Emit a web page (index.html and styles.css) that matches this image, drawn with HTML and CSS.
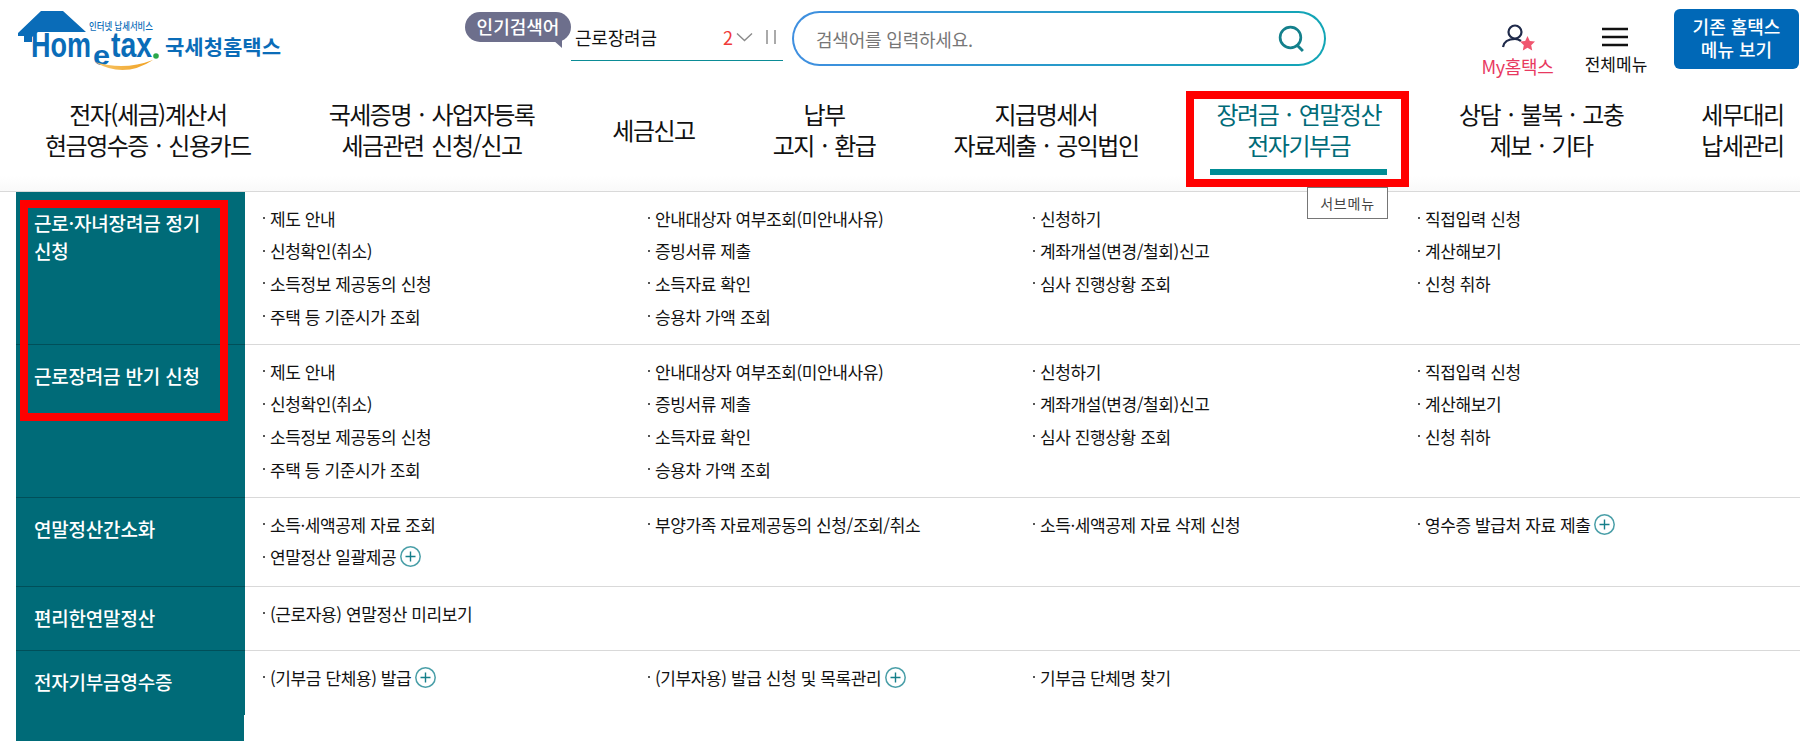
FILE: index.html
```html
<!DOCTYPE html>
<html lang="ko">
<head>
  <meta charset="UTF-8" />
  <title>국세청 홈택스</title>
  <link rel="stylesheet" href="styles.css">
</head>
<body>

  <!-- top bar -->
  <header class="topbar">
    <a class="logo" href="#">
      <svg width="268" height="64" viewBox="0 0 268 64">
        <defs>
          <linearGradient id="smile" x1="0" x2="1" y1="0" y2="0">
            <stop offset="0" stop-color="#f7c66b"/>
            <stop offset="1" stop-color="#f0a020"/>
          </linearGradient>
        </defs>
        <path d="M0 22 L23 0 H45 L68 21 H20 L14 26 V31 H6 V25 H0 Z" fill="#0a6cb8"/>
        <text class="logo-sub" x="71" y="19" textLength="64" lengthAdjust="spacingAndGlyphs">인터넷 납세서비스</text>
        <text class="logo-word" x="13" y="46" textLength="60" lengthAdjust="spacingAndGlyphs">Hom</text>
        <text class="logo-e" x="75" y="54" textLength="17" lengthAdjust="spacingAndGlyphs">e</text>
        <text class="logo-word" x="93" y="46" textLength="41" lengthAdjust="spacingAndGlyphs">tax</text>
        <circle cx="138" cy="45" r="2.8" fill="#2aa84a"/>
        <path d="M77 51 Q106 68 135 49 Q106 60 77 51 Z" fill="url(#smile)"/>
        <text class="logo-name" x="147" y="44" textLength="116" lengthAdjust="spacingAndGlyphs">국세청홈택스</text>
      </svg>
    </a>

    <div class="popular">
      <span class="popular-pill">인기검색어</span>
      <div class="ticker">
        <span class="ticker-word">근로장려금</span>
        <span class="ticker-num">2</span>
        <svg width="17" height="10" viewBox="0 0 17 10"><path d="M1 1.5 L8.5 8.5 L16 1.5" fill="none" stroke="#8a8a8a" stroke-width="1.4"/></svg>
        <span class="ticker-pause"></span>
      </div>
    </div>

    <form class="search">
      <span class="search-text">검색어를 입력하세요.</span>
      <svg width="29" height="29" viewBox="0 0 28 28"><circle cx="13" cy="13" r="10" fill="none" stroke="#14808c" stroke-width="2.6"/><path d="M19 20 L25 26" stroke="#14808c" stroke-width="2.8"/></svg>
    </form>

    <div class="util">
      <a class="util-item util-my" href="#">
        <svg width="34" height="28" viewBox="0 0 34 28">
          <circle cx="14" cy="8" r="6.5" fill="none" stroke="#1f2a4a" stroke-width="2.2"/>
          <path d="M2 23 C3 17 8 15 14 15 C16 15 18 15.5 20 17" fill="none" stroke="#1f2a4a" stroke-width="2.2"/>
          <path d="M26.5 12 L28.8 17 L34 17.6 L30.2 21.2 L31.2 26.5 L26.5 23.8 L21.8 26.5 L22.8 21.2 L19 17.6 L24.2 17 Z" fill="#f0566f"/>
        </svg>
        <span>My홈택스</span>
      </a>
      <a class="util-item util-all" href="#">
        <svg width="26" height="20" viewBox="0 0 26 20"><path d="M0 2 H26 M0 10 H26 M0 18 H26" stroke="#111" stroke-width="2.4"/></svg>
        <span>전체메뉴</span>
      </a>
      <a class="old-menu" href="#">기존 홈택스<br>메뉴 보기</a>
    </div>
  </header>

  <!-- main nav -->
  <nav class="gnb">
    <a href="#">전자(세금)계산서<br>현금영수증 · 신용카드</a>
    <a href="#">국세증명 · 사업자등록<br>세금관련 신청/신고</a>
    <a href="#">세금신고</a>
    <a href="#">납부<br>고지 · 환급</a>
    <a href="#">지급명세서<br>자료제출 · 공익법인</a>
    <a href="#" class="active">장려금 · 연말정산<br>전자기부금</a>
    <a href="#">상담 · 불복 · 고충<br>제보 · 기타</a>
    <a href="#">세무대리<br>납세관리</a>
  </nav>

  <!-- plus icon used in the lists -->
  <svg class="icon-defs" width="0" height="0">
    <symbol id="plus" viewBox="0 0 21 21">
      <circle cx="10.5" cy="10.5" r="9.7" fill="none" stroke="#4a9fa8" stroke-width="1.5"/>
      <path d="M5.5 10.5 H15.5 M10.5 5.5 V15.5" stroke="#157f8a" stroke-width="1.4"/>
    </symbol>
  </svg>

  <!-- sub menu -->
  <main class="submenu">
    <section class="row row-4">
      <h3>근로·자녀장려금 정기 신청</h3>
      <ul>
        <li>제도 안내</li><li>안내대상자 여부조회(미안내사유)</li><li>신청하기</li><li>직접입력 신청</li>
        <li>신청확인(취소)</li><li>증빙서류 제출</li><li>계좌개설(변경/철회)신고</li><li>계산해보기</li>
        <li>소득정보 제공동의 신청</li><li>소득자료 확인</li><li>심사 진행상황 조회</li><li>신청 취하</li>
        <li>주택 등 기준시가 조회</li><li>승용차 가액 조회</li>
      </ul>
    </section>
    <section class="row row-4">
      <h3>근로장려금 반기 신청</h3>
      <ul>
        <li>제도 안내</li><li>안내대상자 여부조회(미안내사유)</li><li>신청하기</li><li>직접입력 신청</li>
        <li>신청확인(취소)</li><li>증빙서류 제출</li><li>계좌개설(변경/철회)신고</li><li>계산해보기</li>
        <li>소득정보 제공동의 신청</li><li>소득자료 확인</li><li>심사 진행상황 조회</li><li>신청 취하</li>
        <li>주택 등 기준시가 조회</li><li>승용차 가액 조회</li>
      </ul>
    </section>
    <section class="row row-2">
      <h3>연말정산간소화</h3>
      <ul>
        <li>소득·세액공제 자료 조회</li><li>부양가족 자료제공동의 신청/조회/취소</li><li>소득·세액공제 자료 삭제 신청</li><li>영수증 발급처 자료 제출<svg class="plus"><use href="#plus"/></svg></li>
        <li>연말정산 일괄제공<svg class="plus"><use href="#plus"/></svg></li>
      </ul>
    </section>
    <section class="row row-1">
      <h3>편리한연말정산</h3>
      <ul>
        <li>(근로자용) 연말정산 미리보기</li>
      </ul>
    </section>
    <section class="row row-1 row-last">
      <h3>전자기부금영수증</h3>
      <ul>
        <li>(기부금 단체용) 발급<svg class="plus"><use href="#plus"/></svg></li><li>(기부자용) 발급 신청 및 목록관리<svg class="plus"><use href="#plus"/></svg></li><li>기부금 단체명 찾기</li>
      </ul>
    </section>
    <div class="side-tail"></div>
  </main>

  <!-- annotations over the page -->
  <div class="mark mark-nav"></div>
  <div class="mark mark-side"></div>
  <div class="tooltip">서브메뉴</div>

</body>
</html>
```

FILE: styles.css
```css
* {
  box-sizing: border-box;
}
html, body {
  height: 741px;
  overflow: hidden;
}
body {
  margin: 0;
  position: relative;
  background: #fff;
  color: #111;
  font-family: "Noto Sans CJK KR", "Noto Sans", sans-serif;
}
a {
  color: inherit;
  text-decoration: none;
}

/* top bar */
.topbar {
  display: flex;
  align-items: flex-start;
  height: 91px;
  padding-top: 9px;
}
.logo {
  width: 465px;
  padding: 2px 0 0 18px;
  flex: none;
}
.logo-sub {
  font-size: 10px;
  font-weight: 500;
  fill: #0a6cb8;
}
.logo-word {
  font-family: "Liberation Sans", sans-serif;
  font-size: 35px;
  font-weight: 700;
  fill: #0a6cb8;
}
.logo-e {
  font-family: "Liberation Sans", sans-serif;
  font-size: 28px;
  font-weight: 700;
  fill: #0a6cb8;
}
.logo-name {
  font-size: 20px;
  font-weight: 700;
  fill: #0a6cb8;
}
.popular {
  display: flex;
  width: 318px;
  flex: none;
}
.popular-pill {
  position: relative;
  width: 106px;
  height: 30px;
  margin-top: 3px;
  flex: none;
  border-radius: 15px;
  background: #6d6f8c;
  color: #fff;
  font-size: 18px;
  font-weight: 500;
  line-height: 28px;
  text-align: center;
}
.popular-pill::after {
  content: "";
  position: absolute;
  right: 9px;
  top: 28px;
  border-top: 8px solid #6d6f8c;
  border-left: 9px solid transparent;
}
.ticker {
  display: flex;
  align-items: center;
  width: 212px;
  height: 43px;
  margin: 9px 0 0 0;
  padding: 0 0 4px 4px;
  border-bottom: 1px solid #0b8c96;
}
.ticker-word {
  width: 148px;
  font-size: 18px;
  letter-spacing: -0.2px;
}
.ticker-num {
  width: 13px;
  color: #f03a3a;
  font-size: 18px;
}
.ticker-pause {
  width: 10px;
  height: 14px;
  margin-left: 13px;
  border-left: 2px solid #aaa;
  border-right: 2px solid #aaa;
}
.search {
  display: flex;
  align-items: center;
  justify-content: space-between;
  width: 534px;
  height: 55px;
  margin: 2px 0 0 9px;
  flex: none;
  padding: 0 18px 0 22px;
  border: 2px solid transparent;
  border-radius: 28px;
  background: linear-gradient(#fff, #fff) padding-box, linear-gradient(90deg, #3f8fe0, #12a5b5) border-box;
}
.search-text {
  color: #777;
  font-size: 18px;
  letter-spacing: -0.2px;
}
.util {
  display: flex;
  flex: 1;
  margin-left: 154px;
  align-items: flex-start;
}
.util-item {
  display: flex;
  flex-direction: column;
  align-items: center;
  white-space: nowrap;
}
.util-my {
  width: 75px;
  padding-top: 15px;
  color: #e8395f;
  font-size: 18px;
  line-height: 24px;
  letter-spacing: -0.3px;
}
.util-my svg {
  margin-bottom: 2px;
}
.util-all {
  width: 66px;
  margin-left: 28px;
  padding-top: 18px;
  font-size: 17px;
  line-height: 24px;
}
.util-all svg {
  margin-bottom: 5px;
  margin-right: 2px;
}
.old-menu {
  width: 125px;
  height: 60px;
  margin-left: 25px;
  flex: none;
  padding-top: 6px;
  border-radius: 6px;
  background: #0068b7;
  color: #fff;
  font-size: 18px;
  font-weight: 500;
  line-height: 23px;
  text-align: center;
}

/* main nav */
.gnb {
  display: flex;
  gap: 66px;
  height: 101px;
  padding: 6px 0 0 39px;
  border-bottom: 1px solid #d9d9d9;
  background: linear-gradient(#fff 85%, #f9f9f9);
  white-space: nowrap;
}
.gnb a {
  display: flex;
  align-items: center;
  box-sizing: content-box;
  height: 64px;
  padding: 0 6px 8px;
  border-bottom: 6px solid transparent;
  font-size: 24px;
  line-height: 31px;
  letter-spacing: -1.5px;
  word-spacing: 2.4px;
  text-align: center;
}
.gnb a.active {
  border-bottom-color: #008c95;
  color: #006b78;
}

/* sub menu */
.icon-defs {
  position: absolute;
}
.row {
  display: grid;
  grid-template-columns: 229px 1fr;
  margin-left: 16px;
}
.row h3 {
  margin: 0;
  padding: 17px 16px 0 18px;
  border-bottom: 1px solid #004f59;
  background: #006b78;
  color: #fff;
  font-size: 19px;
  font-weight: 500;
  line-height: 28px;
  letter-spacing: -0.2px;
  word-break: keep-all;
}
.row ul {
  display: grid;
  grid-template-columns: repeat(4, 385px);
  grid-auto-rows: 32.6px;
  align-content: start;
  margin: 0;
  padding: 10px 0 0 18px;
  border-bottom: 1px solid #d9d9d9;
  list-style: none;
}
.row li {
  display: flex;
  align-items: center;
  font-size: 17px;
  letter-spacing: -0.4px;
  white-space: nowrap;
}
.row li::before {
  content: "";
  width: 2px;
  height: 2px;
  margin: 0 5px 0 0;
  background: #555;
}
.row-4 {
  height: 153px;
}
.row-2 {
  height: 89px;
}
.row-1 {
  height: 64px;
}
.row-last h3,
.row-last ul {
  border-bottom: 0;
}
.plus {
  width: 21px;
  height: 21px;
  margin-left: 4px;
}
.side-tail {
  width: 228px;
  height: 30px;
  margin-left: 16px;
  background: #006b78;
}

/* red marks + tooltip */
.mark {
  position: absolute;
  border: 8px solid #f00;
}
.mark-nav {
  left: 1186px;
  top: 91px;
  width: 223px;
  height: 96px;
}
.mark-side {
  left: 20px;
  top: 200px;
  width: 208px;
  height: 221px;
}
.tooltip {
  position: absolute;
  left: 1307px;
  top: 187px;
  width: 81px;
  height: 32px;
  border: 1px solid #767676;
  background: #fff;
  color: #444;
  font-size: 14px;
  line-height: 30px;
  text-align: center;
  letter-spacing: 0.8px;
}
```
